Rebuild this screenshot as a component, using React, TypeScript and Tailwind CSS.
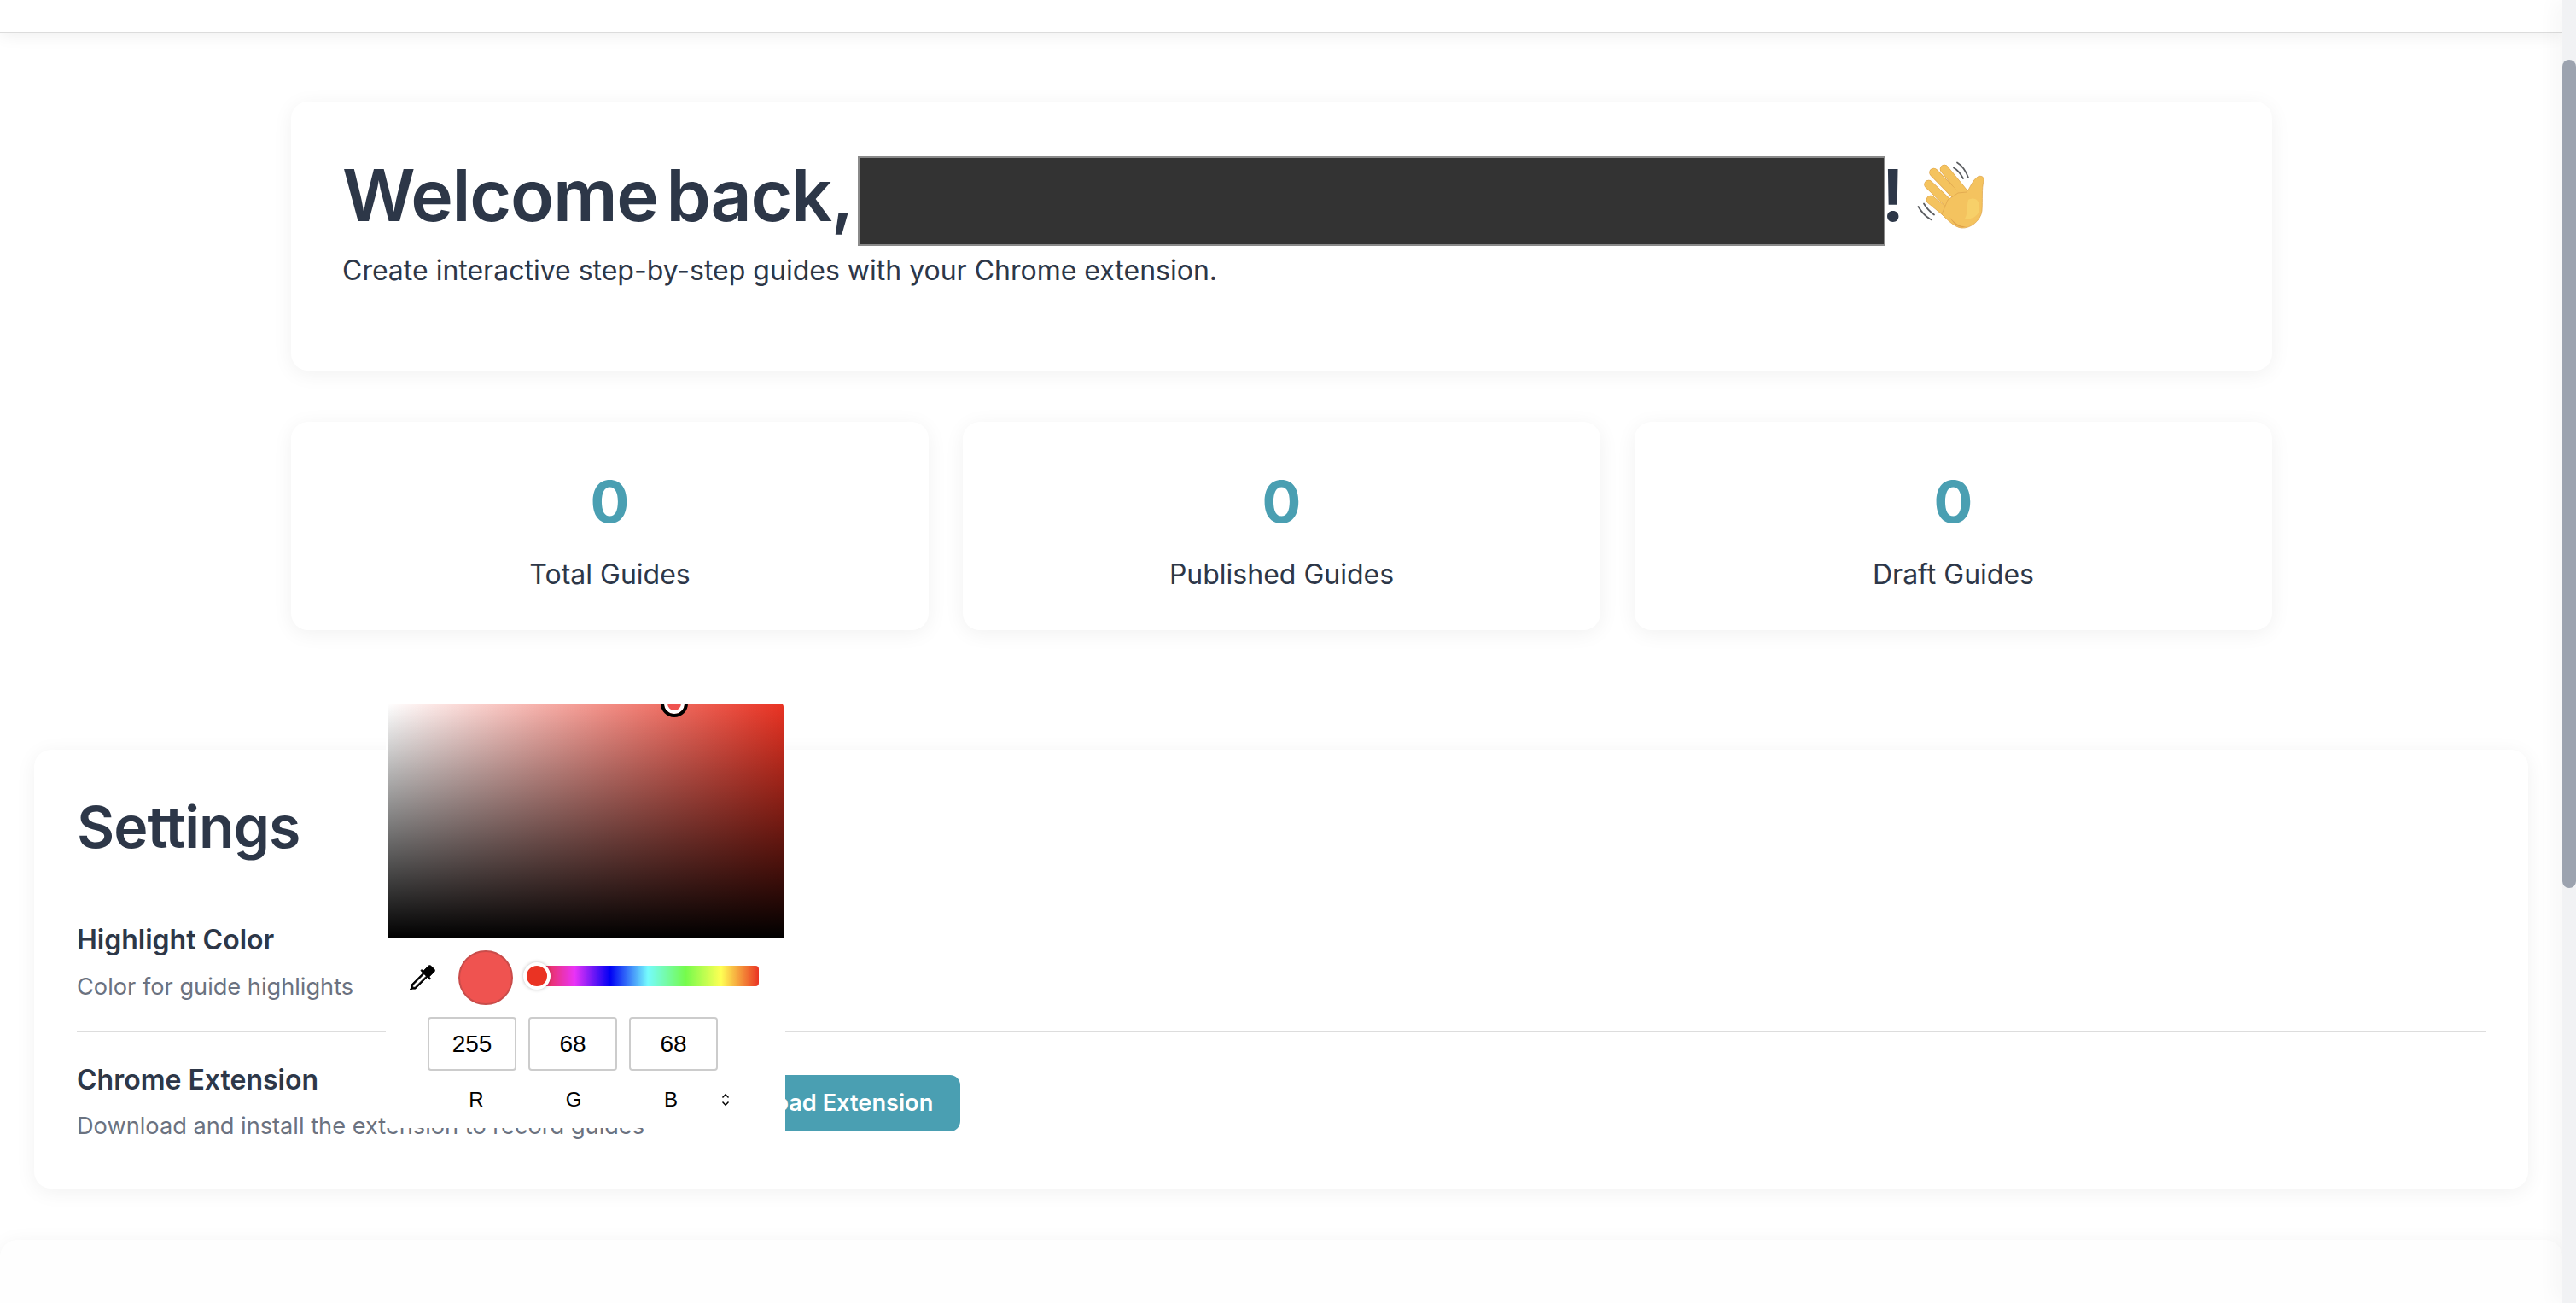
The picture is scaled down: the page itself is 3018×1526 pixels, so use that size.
import { BsEyedropper } from "react-icons/bs";

const sans = "font-['Inter','Noto_Sans',sans-serif]";

function WaveEmoji() {
  const fingers = [
    [32, 10, 55, 38],
    [19.5, 14, 47, 42],
    [13.5, 28, 41, 54],
    [16, 46, 38, 64],
  ];
  return (
    <svg viewBox="0 0 80 80" className="w-[80px] h-[80px] shrink-0 ml-[16px] mt-[9px]" fill="none">
      <g stroke="#5b5d61" strokeWidth="1.8" strokeLinecap="round">
        <path d="M47 2.5C53 6 57 12 60 20" />
        <path d="M43 8.5C47.5 11 51 15.5 54 21" />
        <path d="M1.5 54C5 60 10 66 17 69.5" />
        <path d="M8 50.5C11 55.5 15 60 20 63.5" />
      </g>
      <g strokeLinecap="round">
        {fingers.map(([a, b, c, d]) => (
          <line key={a + "o"} x1={a} y1={b} x2={c} y2={d} stroke="#dca24a" strokeWidth="10.5" />
        ))}
        {fingers.map(([a, b, c, d]) => (
          <line key={a + "f"} x1={a} y1={b} x2={c} y2={d} stroke="#f4c35f" strokeWidth="9.4" />
        ))}
      </g>
      <path
        d="M36 46L48 38L58 37C62 33 65 22 72 18.5C77 17.5 79 20.5 78 24C75.5 33 77 46 76 59C74.5 71 62 80 52 79C44 78 36 70 29 63Z"
        fill="#f4c35f"
        stroke="#dca24a"
        strokeWidth="0.7"
      />
      <path d="M60 46C68 42 74 46 73 58C71 66 62 70 56 68C60 62 58 52 60 46Z" fill="#f7d069" />
      <path d="M38 66C44 74 52 78 58 77C52 80 44 77 38 66Z" fill="#dfa24c" />
    </svg>
  );
}

function Stat({ label }: { label: string }) {
  return (
    <div className="h-[244px] bg-white rounded-[20px] shadow-[0_4px_24px_rgba(0,0,0,0.06)] pt-[53px] text-center">
      <div className="h-[80px] leading-[80px] text-[68px] font-bold text-[#4a9fb2] font-['Inter',sans-serif]">0</div>
      <div className="mt-[24px] h-[44px] leading-[44px] text-[32px] text-[#2d3748] font-['Inter',sans-serif]">{label}</div>
    </div>
  );
}

function ColorPicker() {
  return (
    <div className="absolute left-[452px] top-[824px] w-[468px] h-[497px] bg-white font-['Liberation_Sans',Arial,sans-serif] text-black">
      <div className="relative mx-[2px] h-[275px] overflow-hidden rounded-t-[4px] bg-[linear-gradient(to_bottom,transparent,#000),linear-gradient(to_right,#fff,#ea3323)]">
        <div className="absolute left-[324px] top-[-12px] w-[24px] h-[24px] rounded-full bg-[#ef5350] border-[4px] border-white outline-[4px] outline-black" />
      </div>
      <div className="flex items-center h-[92px]">
        <BsEyedropper className="ml-[28px] w-[30px] h-[30px] text-black stroke-black stroke-[0.4]" />
        <div className="ml-[27px] w-[64px] h-[64px] rounded-full bg-[#ef5350] border-2 border-[#c94c4a]" />
        <div className="relative mb-[4px] ml-[28px] w-[260px] h-[24px] rounded-r-[4px] bg-[linear-gradient(to_right,#ea3323,#ea33f7_17%,#0000f5_33%,#75fbfd_50%,#75fb4c_67%,#ffff54_83%,#ea3323)]">
          <div className="absolute left-[-16px] top-[-4px] w-[32px] h-[32px] rounded-full bg-[#ea3323] border-[4px] border-white shadow-[0_0_4px_rgba(0,0,0,0.25)]" />
        </div>
      </div>
      <div className="flex gap-[14px] pl-[49px]">
        {["255", "68", "68"].map((v, i) => (
          <div
            key={i}
            className="w-[104px] h-[63px] flex items-center justify-center border-2 border-[#cccccc] rounded-[4px] text-[28px]"
          >
            {v}
          </div>
        ))}
      </div>
      <div className="flex items-center gap-[10px] pl-[54px] mt-[19px] h-[30px] text-[24px]">
        {["R", "G", "B"].map((v) => (
          <div key={v} className="w-[104px] text-center">
            {v}
          </div>
        ))}
        <svg viewBox="0 0 10 16" className="w-[10px] h-[16px] ml-[-3px]" fill="none" stroke="#000" strokeWidth="1.5">
          <path d="M1.5 5.5L5 1.8L8.5 5.5" />
          <path d="M1.5 10.5L5 14.2L8.5 10.5" />
        </svg>
      </div>
      <div className="absolute left-[308px] top-full w-[160px] h-[10px] bg-white" />
    </div>
  );
}

export default function App() {
  return (
    <div className={`relative flex h-[1526px] w-full overflow-hidden bg-white ${sans}`}>
      <main className="flex-1 min-w-0">
        <div className="relative z-[1] h-[39px] bg-white border-b-2 border-[#dcdcdc] shadow-[0_2px_20px_rgba(0,0,0,0.07)]" />
        <div className="w-[2321px] ml-[341px] mt-[80px]">
          <section className="h-[315px] bg-white rounded-[20px] shadow-[0_4px_24px_rgba(0,0,0,0.06)] py-[60px] px-[60px]">
            <h1 className="flex items-start text-[84px] leading-[99px] font-semibold tracking-[-0.015em] [word-spacing:-10px] text-[#2d3748] font-['Inter',sans-serif]">
              <span>Welcome back,</span>
              <span className="ml-[6px] mt-[4px] w-[1204px] h-[105px] shrink-0 bg-[#333333] border-2 border-[#8a8a8a]" />
              <span className="ml-[-5px]">!</span>
              <WaveEmoji />
            </h1>
            <p className="mt-[7px] text-[32px] leading-[44px] text-[#2d3748]">
              Create interactive step-by-step guides with your Chrome extension.
            </p>
          </section>
          <div className="grid grid-cols-3 gap-[40px] mt-[60px]">
            <Stat label="Total Guides" />
            <Stat label="Published Guides" />
            <Stat label="Draft Guides" />
          </div>
        </div>
        <section className="mx-[40px] mt-[140px] h-[514px] bg-white rounded-[20px] shadow-[0_4px_24px_rgba(0,0,0,0.06)] px-[50px] pt-[50px]">
          <h2 className="h-[80px] leading-[80px] text-[68px] font-semibold tracking-[-0.015em] text-[#2d3748]">Settings</h2>
          <div className="mt-[73px] pb-[31px] border-b-2 border-[#dddddd]">
            <div className="h-[40px] leading-[40px] text-[32px] font-semibold text-[#2d3748]">Highlight Color</div>
            <div className="mt-[15px] h-[40px] leading-[40px] text-[27.2px] text-[#6b7280]">Color for guide highlights</div>
          </div>
          <div className="flex items-center pt-[36px] gap-[38px]">
            <div>
              <div className="h-[40px] leading-[40px] text-[32px] font-semibold text-[#2d3748]">Chrome Extension</div>
              <div className="mt-[14px] h-[40px] leading-[40px] text-[27.2px] text-[#6b7280]">
                Download and install the extension to record guides
              </div>
            </div>
            <button className="h-[66px] px-[32px] rounded-[12px] bg-[#4a9fb2] text-white text-[27.2px] font-semibold">
              Download Extension
            </button>
          </div>
        </section>
        <section className="mt-[60px] h-[400px] bg-[#fefefe] rounded-[20px] shadow-[0_4px_24px_rgba(0,0,0,0.06)]" />
      </main>
      <aside className="relative z-[2] w-[16px] shrink-0 bg-[#f1f2f4] pt-[70px] shadow-[-6px_0_24px_rgba(0,0,0,0.05)]">
        <div className="h-[970px] rounded-full bg-[#9ca3af]" />
      </aside>
      <ColorPicker />
    </div>
  );
}
